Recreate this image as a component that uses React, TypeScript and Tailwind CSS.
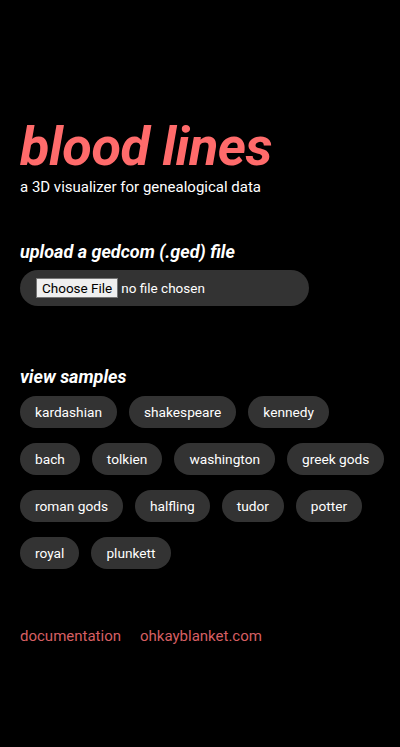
const samples = [
  "kardashian",
  "shakespeare",
  "kennedy",
  "bach",
  "tolkien",
  "washington",
  "greek gods",
  "roman gods",
  "halfling",
  "tudor",
  "potter",
  "royal",
  "plunkett",
];

export default function App() {
  return (
    <div
      className="min-h-[747px] w-full bg-black pl-5 pr-2 pt-[117px] text-white"
      style={{ fontFamily: "Roboto, 'Liberation Sans', sans-serif" }}
    >
      <h1 className="text-[54px] font-bold italic leading-[60px] tracking-[-0.5px] text-[#ff6b6b]">
        blood lines
      </h1>
      <p className="mt-0 text-[15px] leading-5 text-white">a 3D visualizer for genealogical data</p>

      <h2 className="mt-[43px] text-lg font-bold italic leading-6">upload a gedcom (.ged) file</h2>
      <div className="mt-[6px] flex h-9 w-[289px] items-center rounded-full bg-[#333333] px-4">
        <span className="flex h-5 items-center border border-[#767676] bg-[#efefef] px-[5px] text-[13.5px] text-black">
          Choose File
        </span>
        <span className="ml-[3px] text-[13.5px] text-white">no file chosen</span>
      </div>

      <h2 className="mt-[59px] text-lg font-bold italic leading-6">view samples</h2>
      <div className="mt-[7px] flex flex-wrap gap-x-3 gap-y-[15px]">
        {samples.map((s) => (
          <button
            key={s}
            className="h-8 rounded-full bg-[#333333] px-[15px] text-[13.7px] leading-8 text-white"
          >
            {s}
          </button>
        ))}
      </div>

      <div className="mt-[56px] flex gap-[19px] text-[15px] text-[#d65f63]">
        <a href="#">documentation</a>
        <a href="#">ohkayblanket.com</a>
      </div>
    </div>
  );
}
